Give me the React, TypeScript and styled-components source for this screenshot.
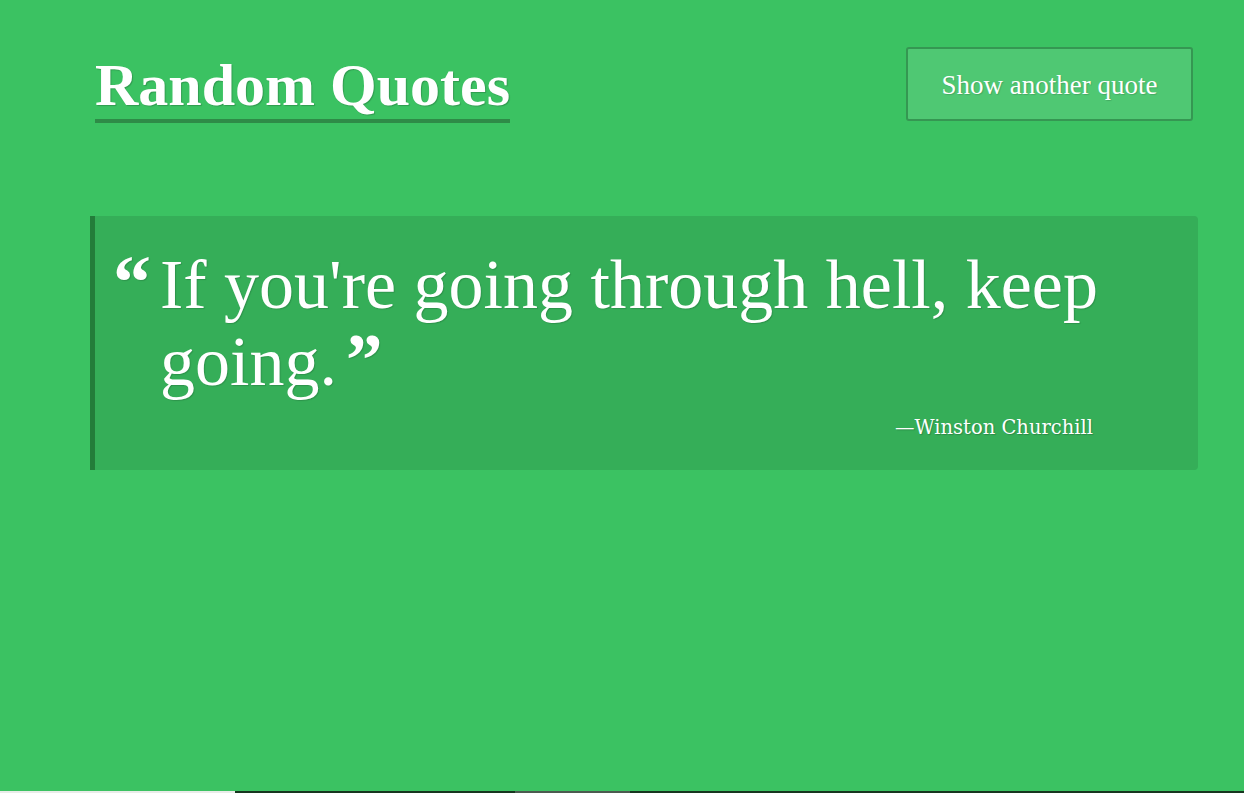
import React from 'react';
import styled, { createGlobalStyle } from 'styled-components';

const GlobalStyle = createGlobalStyle`
  html, body {
    margin: 0;
    padding: 0;
    overflow: hidden;
  }
  body {
    font-family: "Liberation Serif", "DejaVu Serif", serif;
  }
  * {
    box-sizing: border-box;
  }
`;

const QUOTE = {
  text: "If you're going through hell, keep going.",
  author: 'Winston Churchill',
};

const App = () => {
  return (
    <>
      <GlobalStyle />
      <Page>
        <Header>
          <Title>Random Quotes</Title>
          <Button type="button">Show another quote</Button>
        </Header>
        <QuoteBox>
          <QuoteRow>
            <OpenMark>“</OpenMark>
            <QuoteText>
              {QUOTE.text}
              <CloseMark>”</CloseMark>
            </QuoteText>
          </QuoteRow>
          <Author>—{QUOTE.author}</Author>
        </QuoteBox>
      </Page>
      <Strip>
        <Segment $width="235px" $color="#e9ece9" />
        <Segment $width="280px" $color="#17351f" />
        <Segment $width="115px" $color="#4c5a50" />
        <Segment $width="auto" $color="#17351f" />
      </Strip>
    </>
  );
};

export default App;

const Page = styled.div`
  height: 791px;
  padding: 47px 46px 0 90px;
  background: #3bc262;
  color: #fff;
`;

const Header = styled.header`
  display: flex;
  justify-content: space-between;
  align-items: flex-start;
  padding: 0 5px;
`;

const Title = styled.h1`
  margin: 4px 0 0;
  font-family: "Liberation Serif", serif;
  font-size: 60px;
  font-weight: 700;
  line-height: 68px;
  color: #fff;
  border-bottom: 4px solid #2e8b47;
  text-shadow: 1px 1px 1px rgba(0, 0, 0, 0.2);
`;

const Button = styled.button`
  width: 287px;
  height: 74px;
  padding: 3px 0 0;
  font-family: "Liberation Serif", serif;
  font-size: 27px;
  color: #fff;
  background: #4fc873;
  border: 2px solid #359752;
  border-radius: 3px;
  text-shadow: 1px 1px 1px rgba(0, 0, 0, 0.15);
  cursor: pointer;
`;

const QuoteBox = styled.blockquote`
  margin: 93px 0 0;
  padding: 30px 0 31px 18px;
  background: #35ae58;
  border-left: 5px solid #237d3a;
  border-radius: 0 4px 4px 0;
`;

const QuoteRow = styled.div`
  display: flex;
  align-items: flex-start;
`;

const OpenMark = styled.span`
  flex: 0 0 47px;
  font-size: 76px;
  font-weight: 700;
  line-height: 72px;
  text-shadow: 1px 1px 1px rgba(0, 0, 0, 0.15);
`;

const QuoteText = styled.p`
  margin: 0;
  max-width: 950px;
  font-family: "Liberation Serif", serif;
  font-size: 70px;
  line-height: 77px;
  text-shadow: 1px 1px 1px rgba(0, 0, 0, 0.15);
`;

const CloseMark = styled.span`
  margin-left: 9px;
  font-size: 73px;
  font-weight: 700;
  line-height: 0;
`;

const Author = styled.cite`
  display: block;
  margin: 17px 105px 0 0;
  text-align: right;
  font-family: "DejaVu Serif", serif;
  font-style: normal;
  font-size: 19.5px;
  line-height: 22px;
  text-shadow: 1px 1px 1px rgba(0, 0, 0, 0.2);
`;

const Strip = styled.div`
  display: flex;
  height: 2px;
`;

const Segment = styled.div<{ $width: string; $color: string }>`
  flex: ${(p) => (p.$width === 'auto' ? '1 1 auto' : `0 0 ${p.$width}`)};
  background: ${(p) => p.$color};
`;
